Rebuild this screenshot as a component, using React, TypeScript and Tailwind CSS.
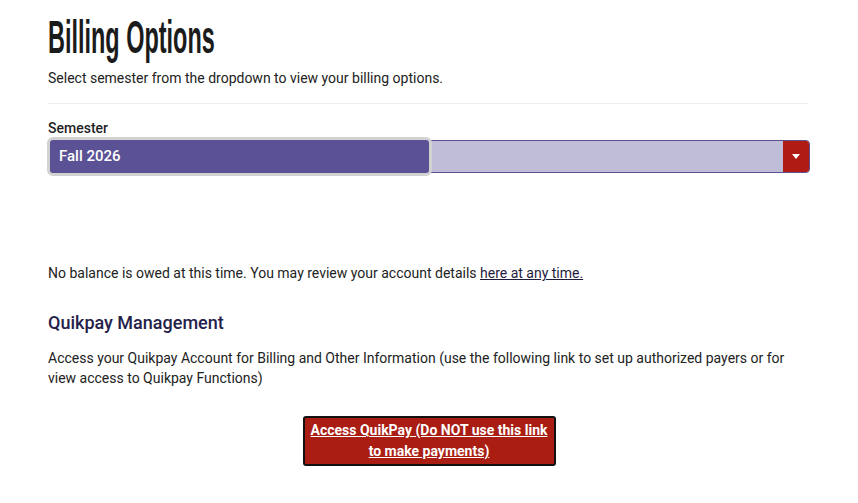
import React from "react";

export default function App() {
  return (
    <div className="min-h-[503px] w-full bg-white font-['Roboto','Liberation_Sans',sans-serif] text-[#222222]">
      <div className="ml-[48px] w-[762px] pt-[14px]">
        <h1 className="h-[46px] overflow-visible whitespace-nowrap">
          <span className="inline-block origin-left scale-x-[0.51] font-['Liberation_Sans',sans-serif] text-[46px] font-bold leading-[46px] text-[#1b1b1b]">
            Billing Options
          </span>
        </h1>
        <p className="mt-[8px] text-[14px] leading-[20px]">
          Select semester from the dropdown to view your billing options.
        </p>
        <div className="mt-[15px] h-px w-[760px] bg-[#eeeeee]" />
        <div className="mt-[14px] text-[14px] font-medium leading-[20px] text-[#1f1f1f]">Semester</div>
        <div className="mt-[2px] flex h-[33px] items-stretch rounded-[4px] border border-[#5b5193] bg-[#c0bed6]">
          <div className="-my-[4px] -ml-[2px] flex w-[385px] items-center rounded-[6px] border-[3px] border-[#d2d2d2] bg-[#5b5195] pl-[9px] text-[15px] font-medium text-white">
            Fall 2026
          </div>
          <div className="flex-1" />
          <div className="flex w-[26px] items-center justify-center rounded-r-[3px] bg-[#b01c14]">
            <svg width="8" height="5" viewBox="0 0 8 5">
              <path d="M0 0 L8 0 L4 5 Z" fill="#ffffff" />
            </svg>
          </div>
        </div>
        <p className="mt-[90px] text-[14px] leading-[20px]">
          No balance is owed at this time. You may review your account details{" "}
          <a href="#" className="text-[#1f1c3d] underline">here at any time.</a>
        </p>
        <h2 className="mt-[28px] text-[18px] font-medium leading-[24px] text-[#24214a]">Quikpay Management</h2>
        <p className="mt-[13px] text-[14px] leading-[20px]">
          Access your Quikpay Account for Billing and Other Information (use the following link to set up authorized payers or for view access to Quikpay Functions)
        </p>
        <div className="mt-[28px] flex justify-center">
          <a
            href="#"
            className="block w-[253px] rounded-[3px] border-2 border-[#111111] bg-[#a91d13] px-[6px] py-[2px] text-center text-[14px] font-bold leading-[21px] text-white underline"
          >
            Access QuikPay (Do NOT use this link to make payments)
          </a>
        </div>
      </div>
    </div>
  );
}
